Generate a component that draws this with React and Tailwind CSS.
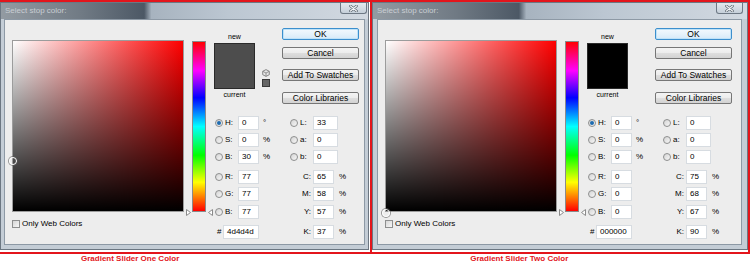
import React from 'react';

const dialogs = [
  {
    key: 'one',
    outer: 'w-[369px]',
    client: 'ml-[3px] mr-[3px]',
    closeMr: 'mr-[1px]',
    swatch: 'bg-[#4d4d4d]',
    marker: 'top-[116px]',
    hsb: ['0', '0', '30'],
    lab: ['33', '0', '0'],
    rgb: ['77', '77', '77'],
    cmyk: ['65', '58', '57', '37'],
    hex: '4d4d4d',
    warn: true,
  },
  {
    key: 'two',
    outer: 'w-[376px]',
    client: 'ml-[4px] mr-[5px]',
    closeMr: 'mr-[4px]',
    swatch: 'bg-black',
    marker: 'top-[168px]',
    hsb: ['0', '0', '0'],
    lab: ['0', '0', '0'],
    rgb: ['0', '0', '0'],
    cmyk: ['75', '68', '67', '90'],
    hex: '000000',
    warn: false,
  },
];

function Radio({ on }) {
  return (
    <span className="w-[8px] h-[8px] shrink-0 rounded-full border border-[#8e8f8f] bg-[linear-gradient(135deg,#d4d4d4,#f7f7f7)] flex items-center justify-center">
      {on && <span className="w-[4px] h-[4px] rounded-full bg-[#1d6bb0]" />}
    </span>
  );
}

function Box({ value, w }) {
  return (
    <div className={`${w} h-[14px] bg-white border border-[#d7dce1] pl-[3px] text-[8px] leading-[12px] text-black`}>
      {value}
    </div>
  );
}

function Button({ children, primary }) {
  return (
    <div
      className={
        primary
          ? 'h-[12px] rounded-[2px] border border-[#3c8fcd] bg-[linear-gradient(#f3f9fd,#e6f2fb_50%,#d6eaf8)] shadow-[inset_0_0_0_1px_#bfe2f8] text-center text-[8.5px] leading-[10px] text-black'
          : 'h-[12px] rounded-[2px] border border-[#767676] bg-[linear-gradient(#f4f4f4,#ececec_48%,#dedede_52%,#d2d2d2)] text-center text-[8.5px] leading-[10px] text-black'
      }
    >
      {children}
    </div>
  );
}

function Tri({ dir }) {
  return (
    <svg width="5" height="7" viewBox="0 0 5 7">
      {dir === 'right' ? (
        <polygon points="0.5,0.5 4.5,3.5 0.5,6.5" fill="#fff" stroke="#8a8a8a" strokeWidth="1" />
      ) : (
        <polygon points="4.5,0.5 0.5,3.5 4.5,6.5" fill="#fff" stroke="#8a8a8a" strokeWidth="1" />
      )}
    </svg>
  );
}

function Dialog({ d }) {
  return (
    <div className={`${d.outer} h-[248px] shrink-0 flex flex-col border border-[#6c7782] bg-[#c4cdd6]`}>
      {/* title bar */}
      <div className="h-[16px] flex items-start bg-[linear-gradient(90deg,#939ba2_0%,#707a84_22%,#4c5865_39%,#a7b3bf_41%,#bcc7d2_62%,#d2d9e1_100%)]">
        <span className="ml-[4px] mt-[3px] text-[8px] leading-[10px] text-[#c9ced3]">Select stop color:</span>
        <div className={`ml-auto ${d.closeMr} w-[27px] h-[11px] rounded-b-[3px] border border-t-0 border-[#6d7884] bg-[linear-gradient(#e4e9ee,#c5cfd9)] flex items-center justify-center`}>
          <svg width="9" height="7" viewBox="0 0 9 7">
            <path d="M1.5 1 L7.5 6 M7.5 1 L1.5 6" stroke="#59636d" strokeWidth="2.6" strokeLinecap="round" />
            <path d="M1.5 1 L7.5 6 M7.5 1 L1.5 6" stroke="#f4f6f8" strokeWidth="1.2" strokeLinecap="round" />
          </svg>
        </div>
      </div>

      {/* client area */}
      <div className={`${d.client} flex-1 border border-[#8d99a5] bg-[#ededed] flex`}>
        {/* colour field */}
        <div className="pl-[7px] pt-[20px] flex flex-col">
          <div className="relative w-[172px] h-[172px] border border-[#9c9c9c] bg-[linear-gradient(to_top,#000,transparent),linear-gradient(to_right,#fff,#f00)]">
            <span className={`absolute left-[-4px] ${d.marker} w-[8px] h-[8px] rounded-full border border-white shadow-[0_0_0_1px_rgba(90,90,90,0.6)]`} />
          </div>
          <div className="mt-[7px] flex items-center">
            <span className="w-[8px] h-[8px] border border-[#8e8f8f] bg-[linear-gradient(135deg,#d6d6d6,#f7f7f7)]" />
            <span className="ml-[2px] text-[8px] leading-[9px] text-black">Only Web Colors</span>
          </div>
        </div>

        {/* hue slider */}
        <div className="relative w-[30px] pt-[21px]">
          <div className="ml-[8px] w-[14px] h-[171px] border border-[#8a8a8a] bg-[linear-gradient(to_bottom,#f00,#f0f_17%,#00f_33%,#0ff_50%,#0f0_67%,#ff0_83%,#f00)]" />
          <div className="absolute left-[2px] top-[189px]">
            <Tri dir="right" />
          </div>
          <div className="absolute left-[24px] top-[189px]">
            <Tri dir="left" />
          </div>
        </div>

        {/* right side */}
        <div className="flex-1 pt-[8px] flex flex-col">
          <div className="flex items-start">
            <div className="w-[41px] flex flex-col items-center">
              <span className="mt-[4px] text-[7px] leading-[9px] text-black">new</span>
              <div className={`mt-[2px] w-[41px] h-[46px] border border-[#2a2a2a] ${d.swatch}`} />
              <span className="mt-[1px] text-[7px] leading-[9px] text-black">current</span>
            </div>
            <div className="ml-[7px] w-[8px] pt-[41px] flex flex-col">
              {d.warn && (
                <>
                  <svg width="8" height="8" viewBox="0 0 8 8">
                    <path d="M4 0.6 L7.3 2.3 L7.3 5.7 L4 7.4 L0.7 5.7 L0.7 2.3 Z" fill="#e6e6e6" stroke="#7d7d7d" strokeWidth="0.9" />
                    <path d="M0.9 2.4 L4 4 L7.1 2.4 M4 4 L4 7.2" fill="none" stroke="#7d7d7d" strokeWidth="0.8" />
                  </svg>
                  <div className="mt-[2px] w-[8px] h-[8px] border border-[#3a3a3a] bg-[#666666]" />
                </>
              )}
            </div>
            <div className="ml-[12px] w-[77px] flex flex-col">
              <Button primary>OK</Button>
              <div className="mt-[7px]">
                <Button>Cancel</Button>
              </div>
              <div className="mt-[10px]">
                <Button>Add To Swatches</Button>
              </div>
              <div className="mt-[11px]">
                <Button>Color Libraries</Button>
              </div>
            </div>
          </div>

          {/* value fields */}
          <div className="mt-[12px] flex flex-col text-[8px] leading-[14px] text-black">
            {[
              ['H:', d.hsb[0], '°', 'L:', d.lab[0], true, 'mt-0'],
              ['S:', d.hsb[1], '%', 'a:', d.lab[1], false, 'mt-[3px]'],
              ['B:', d.hsb[2], '%', 'b:', d.lab[2], false, 'mt-[3px]'],
            ].map(([l, v, u, l2, v2, on, mt]) => (
              <div key={l} className={`${mt} flex h-[14px]`}>
                <div className="w-[76px] pl-[1px] flex items-center">
                  <Radio on={on} />
                  <span className="ml-[2px] w-[13px]">{l}</span>
                  <Box value={v} w="w-[21px]" />
                  <span className="ml-[4px]">{u}</span>
                </div>
                <div className="flex items-center">
                  <Radio />
                  <span className="ml-[2px] w-[13px]">{l2}</span>
                  <Box value={v2} w="w-[25px]" />
                </div>
              </div>
            ))}
            {[
              ['R:', d.rgb[0], 'C:', d.cmyk[0], 'mt-[6px]'],
              ['G:', d.rgb[1], 'M:', d.cmyk[1], 'mt-[3px]'],
              ['B:', d.rgb[2], 'Y:', d.cmyk[2], 'mt-[4px]'],
            ].map(([l, v, l2, v2, mt]) => (
              <div key={l2} className={`${mt} flex h-[14px]`}>
                <div className="w-[76px] pl-[1px] flex items-center">
                  <Radio />
                  <span className="ml-[2px] w-[13px]">{l}</span>
                  <Box value={v} w="w-[21px]" />
                </div>
                <div className="flex items-center">
                  <span className="w-[23px] pr-[2px] text-right">{l2}</span>
                  <Box value={v2} w="w-[21px]" />
                  <span className="ml-[5px]">%</span>
                </div>
              </div>
            ))}
            <div className="mt-[6px] flex h-[14px]">
              <div className="w-[76px] pl-[3px] flex items-center">
                <span className="w-[6px]">#</span>
                <Box value={d.hex} w="w-[36px]" />
              </div>
              <div className="flex items-center">
                <span className="w-[23px] pr-[2px] text-right">K:</span>
                <Box value={d.cmyk[3]} w="w-[21px]" />
                <span className="ml-[5px]">%</span>
              </div>
            </div>
          </div>
        </div>
      </div>
      <div className="h-[4px]" />
    </div>
  );
}

export default function App() {
  return (
    <div className="w-[750px] h-[264px] bg-white font-['Liberation_Sans',Arial,sans-serif] overflow-hidden">
      <div className="flex h-[254px] border-t-2 border-b-2 border-[#e3151c]">
        <div className="flex flex-col">
          <Dialog d={dialogs[0]} />
        </div>
        <div className="w-[1px]" />
        <div className="w-[2px] bg-[#e3151c]" />
        <div className="flex flex-col">
          <Dialog d={dialogs[1]} />
        </div>
        <div className="w-[2px] bg-[#e3151c]" />
      </div>
      <div className="flex h-[10px] text-[8px] leading-[10px] font-bold text-[#e3151c]">
        <span className="ml-[81px]">Gradient Slider One Color</span>
        <span className="ml-[291px]">Gradient Slider Two Color</span>
      </div>
    </div>
  );
}
